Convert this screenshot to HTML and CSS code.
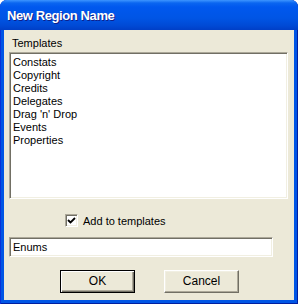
FILE: index.html
```html
<!DOCTYPE html>
<html>
<head>
  <title>New Region Name</title>
  <link rel="stylesheet" href="styles.css">
</head>
<body>
  <div class="window">
    <div class="titlebar">New Region Name</div>
    <div class="client">
      <div class="group-label">Templates</div>
      <div class="listbox">
        <div class="item">Constats</div>
        <div class="item">Copyright</div>
        <div class="item">Credits</div>
        <div class="item">Delegates</div>
        <div class="item">Drag 'n' Drop</div>
        <div class="item">Events</div>
        <div class="item">Properties</div>
      </div>
      <div class="check-row">
        <span class="checkbox">
          <svg width="9" height="9" viewBox="0 0 9 9"><path d="M1 4 L3.5 6.5 L8 2" fill="none" stroke="#000" stroke-width="1.8"/></svg>
        </span>
        <span>Add to templates</span>
      </div>
      <div class="textbox">Enums</div>
      <div class="buttons">
        <div class="button default">OK</div>
        <div class="button">Cancel</div>
      </div>
    </div>
  </div>
</body>
</html>
```

FILE: styles.css
```css
body {
  margin: 0;
  background-color: #ffffff;
  font-family: "Liberation Sans", Arial, sans-serif;
  font-size: 11px;
}

.window {
  width: 298px;
  height: 304px;
  background-color: #0055e5;
  border-radius: 7px 7px 0 0;
  box-sizing: border-box;
  display: flex;
  flex-direction: column;
  box-shadow: inset 1px 0 #0831d9, inset -1px 0 #001ea0, inset 0 -1px #001ea0;
}

.titlebar {
  height: 30px;
  line-height: 31px;
  padding-left: 7px;
  color: #ffffff;
  font-weight: bold;
  font-size: 13px;
  letter-spacing: -0.4px;
  text-shadow: 1px 1px #0f1f8a;
  border-radius: 7px 7px 0 0;
  background: linear-gradient(#3d95ff 0, #0a66f0 3px, #0058ee 7px, #0055e5 18px, #0049d4 26px, #003fc6 30px);
}

.client {
  flex: 1;
  margin: 0 4px 4px 4px;
  background-color: #ece9d8;
  display: flex;
  flex-direction: column;
  padding: 7px 0 0 5px;
}

.group-label {
  padding-left: 3px;
  height: 15px;
}

.listbox {
  width: 279px;
  height: 147px;
  box-sizing: border-box;
  background-color: #ffffff;
  border-top: 1px solid #aca899;
  border-left: 1px solid #aca899;
  border-right: 1px solid #ffffff;
  border-bottom: 1px solid #ffffff;
  box-shadow: inset 1px 1px #716f64, inset -1px -1px #f1efe2;
  padding: 3px 0 0 3px;
}

.item {
  line-height: 13px;
  height: 13px;
  color: #000000;
}

.check-row {
  display: flex;
  align-items: center;
  margin: 15px 0 0 56px;
  height: 13px;
  gap: 5px;
}

.checkbox {
  width: 13px;
  height: 13px;
  box-sizing: border-box;
  background-color: #ffffff;
  border-top: 1px solid #aca899;
  border-left: 1px solid #aca899;
  border-right: 1px solid #ffffff;
  border-bottom: 1px solid #ffffff;
  box-shadow: inset 1px 1px #716f64, inset -1px -1px #f1efe2;
  display: flex;
  align-items: center;
  justify-content: center;
}

.textbox {
  width: 264px;
  height: 20px;
  box-sizing: border-box;
  margin-top: 10px;
  background-color: #ffffff;
  border-top: 1px solid #aca899;
  border-left: 1px solid #aca899;
  border-right: 1px solid #ffffff;
  border-bottom: 1px solid #ffffff;
  box-shadow: inset 1px 1px #716f64, inset -1px -1px #f1efe2;
  padding-left: 3px;
  line-height: 18px;
}

.buttons {
  display: flex;
  gap: 29px;
  margin: 13px 0 0 51px;
}

.button {
  width: 75px;
  height: 23px;
  box-sizing: border-box;
  background-color: #ece9d8;
  border-top: 1px solid #ffffff;
  border-left: 1px solid #ffffff;
  border-right: 1px solid #716f64;
  border-bottom: 1px solid #716f64;
  box-shadow: inset -1px -1px #aca899, inset 1px 1px #f1efe2;
  text-align: center;
  line-height: 21px;
  font-size: 12px;
}

.button.default {
  border: 1px solid #000000;
  box-shadow: inset 1px 1px #ffffff, inset -1px -1px #716f64, inset -2px -2px #aca899;
}
```
